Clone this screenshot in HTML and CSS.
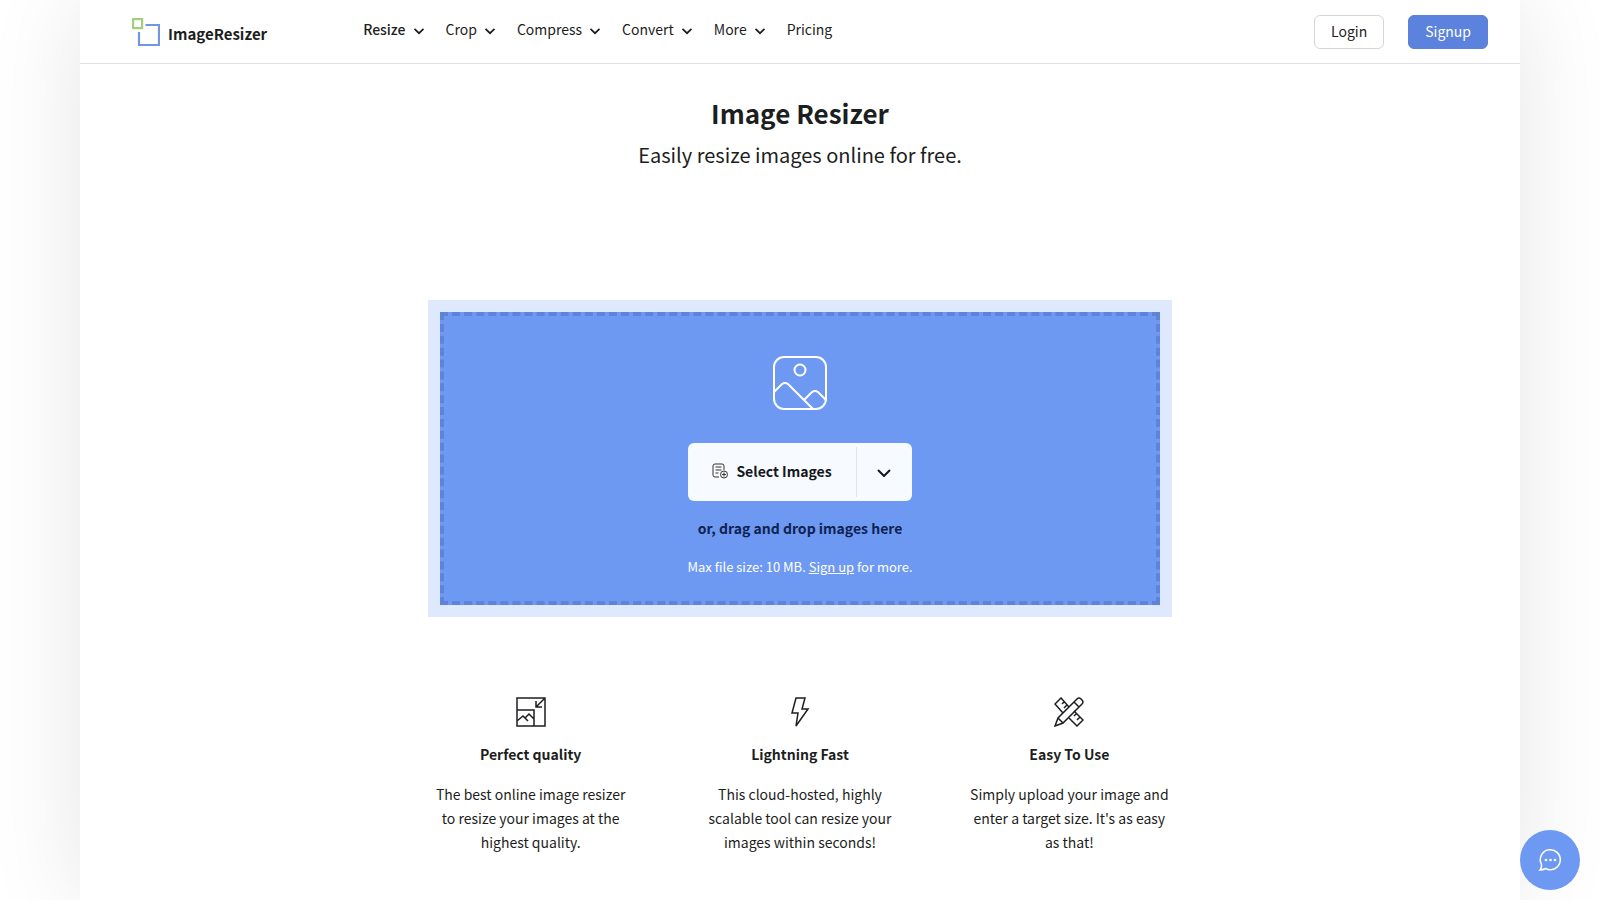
FILE: index.html
```html
<!DOCTYPE html>
<html lang="en">
<head>
  <meta charset="UTF-8">
  <meta name="viewport" content="width=device-width, initial-scale=1.0">
  <title>Image Resizer</title>
  <link rel="stylesheet" href="styles.css">
</head>
<body>
  <div class="page">
    <header class="navbar">
      <a class="logo" href="#">
        <svg width="28" height="28" viewBox="0 0 28 28" fill="none" stroke-width="2.200">
          <rect x="1.100" y="1.100" width="9" height="9" stroke="#a3cf7c"/>
          <path d="M13.500 7H27v20H7V14" stroke="#7296e4"/>
        </svg>
        <span>ImageResizer</span>
      </a>
      <nav class="menu">
        <a class="active" href="#">Resize <svg class="caret" viewBox="0 0 10 6"><path d="M.5 .8L5 5.200 9.500 .8"/></svg></a>
        <a href="#">Crop <svg class="caret" viewBox="0 0 10 6"><path d="M.5 .8L5 5.200 9.500 .8"/></svg></a>
        <a href="#">Compress <svg class="caret" viewBox="0 0 10 6"><path d="M.5 .8L5 5.200 9.500 .8"/></svg></a>
        <a href="#">Convert <svg class="caret" viewBox="0 0 10 6"><path d="M.5 .8L5 5.200 9.500 .8"/></svg></a>
        <a href="#">More <svg class="caret" viewBox="0 0 10 6"><path d="M.5 .8L5 5.200 9.500 .8"/></svg></a>
        <a href="#">Pricing</a>
      </nav>
      <div class="account">
        <a class="btn" href="#">Login</a>
        <a class="btn btn-primary" href="#">Signup</a>
      </div>
    </header>

    <main>
      <div class="hero">
        <h1>Image Resizer</h1>
        <p>Easily resize images online for free.</p>
      </div>

      <section class="uploader">
        <div class="dropzone">
          <svg class="picture" width="54" height="54" viewBox="0 0 54 54">
            <rect x="1" y="1" width="52" height="52" rx="10"/>
            <circle cx="27" cy="14" r="5.500"/>
            <path d="M1 36l8-8q3-2 6 0l25 25M31 44l8-8q3-2 6 0l8 8"/>
          </svg>
          <div class="select">
            <button class="select-main" type="button">
              <svg width="16" height="16" viewBox="0 0 16 16">
                <path d="M7 14H3a2 2 0 0 1-2-2V3a2 2 0 0 1 2-2h7a2 2 0 0 1 2 2v4M3.500 4h6M3.500 7h6M3.500 10h3"/>
                <circle cx="12" cy="11.500" r="3.500"/>
                <path d="M12 9.500v4M10 11.500h4"/>
              </svg>
              Select Images
            </button>
            <button class="select-more" type="button" aria-label="More sources">
              <svg width="14" height="8" viewBox="0 0 14 8"><path d="M1 1l6 6 6-6"/></svg>
            </button>
          </div>
          <p class="drag">or, drag and drop images here</p>
          <p class="limit">Max file size: 10 MB. <a href="#">Sign up</a> for more.</p>
        </div>
      </section>

      <section class="features">
        <div class="feature">
          <svg width="30" height="30" viewBox="0 0 30 30">
            <path d="M1 1h28v28H1zM1 13h17v16M28 2l-8 8M20 4v6h6M1 24l6-5 5 5M9 21l4-4 5 5"/>
          </svg>
          <h2>Perfect quality</h2>
          <p>The best online image resizer to resize your images at the highest quality.</p>
        </div>
        <div class="feature">
          <svg width="30" height="30" viewBox="0 0 30 30">
            <path d="M11 1h9l-3 11h6L11 29l2-13H7z"/>
          </svg>
          <h2>Lightning Fast</h2>
          <p>This cloud-hosted, highly scalable tool can resize your images within seconds!</p>
        </div>
        <div class="feature">
          <svg width="30" height="30" viewBox="0 0 30 30">
            <path d="M1 29l3-8L23 2q2-2 4 0l1 1q2 2 0 4L9 26zM4 21l5 5M20 5l5 5"/>
            <path d="M9 16L1 7l6-6 8 9M10 5L8 7M13 8l-3 3M20 14l9 9-6 6-8-8M22 17l-2 2M26 20l-3 3"/>
          </svg>
          <h2>Easy To Use</h2>
          <p>Simply upload your image and enter a target size. It's as easy as that!</p>
        </div>
      </section>
    </main>
  </div>

  <button class="chat" type="button" aria-label="Open chat">
    <svg width="22" height="22" viewBox="0 0 22 22">
      <path d="M1 21q2-2 1.500-5.500A10 10 0 1 1 6.500 19.500Q4 21 1 21z"/>
      <circle class="dot" cx="7" cy="11" r="1.300"/>
      <circle class="dot" cx="11.500" cy="11" r="1.300"/>
      <circle class="dot" cx="16" cy="11" r="1.300"/>
    </svg>
  </button>
</body>
</html>
```
FILE: styles.css
```css
* {
  box-sizing: border-box;
  margin: 0;
  padding: 0;
}

body {
  font-family: "Noto Sans CJK SC", "Noto Sans", sans-serif;
  font-size: 14px;
  line-height: 24px;
  color: #1c1e21;
  background: #fff;
}

a {
  color: inherit;
  text-decoration: none;
}

svg {
  fill: none;
  flex: none;
}

.page {
  width: 90%;
  min-height: 100vh;
  margin: 0 auto;
  background: #fff;
  box-shadow: 0 0 90px rgba(0, 0, 0, 0.1);
}

.navbar {
  display: flex;
  align-items: center;
  height: 64px;
  padding: 0 32px 0 52px;
  border-bottom: 1px solid #dfe1e5;
}

.logo {
  display: flex;
  align-items: center;
  gap: 8px;
  margin-right: 96px;
  font-size: 15px;
  font-weight: 700;
}

.logo span {
  padding-top: 4px;
}

.menu {
  display: flex;
  gap: 22px;
  padding-bottom: 6px;
}

.menu a {
  display: flex;
  align-items: center;
  gap: 8px;
}

.menu .active {
  font-weight: 500;
}

.caret {
  width: 10px;
  height: 6px;
  margin-top: 5px;
  overflow: visible;
  stroke: #1c1e21;
  stroke-width: 1.700;
}

.account {
  display: flex;
  gap: 24px;
  margin-left: auto;
}

.btn {
  padding: 3px 16px 5px;
  border: 1px solid #d3d6db;
  border-radius: 6px;
}

.btn-primary {
  color: #fff;
  background: #5b82dc;
  border-color: #5b82dc;
}

.hero {
  padding-top: 29px;
  text-align: center;
}

.hero h1 {
  font-size: 26px;
  font-weight: 700;
  line-height: 40px;
}

.hero p {
  margin-top: 4px;
  font-size: 20px;
  line-height: 36px;
}

.uploader {
  max-width: 744px;
  margin: 127px auto 0;
  padding: 12px;
  background: #dfe9fd;
}

.dropzone {
  display: flex;
  flex-direction: column;
  align-items: center;
  padding: 40px 16px 22px;
  background: #6e99f3;
  border: 4px dashed #5f83d6;
}

.picture {
  stroke: #fff;
  stroke-width: 2;
}

.select {
  display: flex;
  height: 58px;
  margin-top: 33px;
  background: #f7fafe;
  border-radius: 6px;
}

.select button {
  padding-bottom: 2px;
  color: #15181c;
  font: inherit;
  font-weight: 700;
  background: none;
  border: none;
  cursor: pointer;
}

.select .select-main {
  display: flex;
  align-items: center;
  gap: 8px;
  padding: 0 24px 2px;
  stroke: #333;
}

.select .select-more {
  width: 56px;
  margin: 4px 0;
  border-left: 1px solid #dfe5ee;
  stroke: #15181c;
  stroke-width: 2;
}

.drag {
  margin-top: 15px;
  color: #0e2350;
  font-weight: 700;
}

.limit {
  margin-top: 15px;
  color: #fff;
  font-size: 13px;
}

.limit a {
  text-decoration: underline;
}

.features {
  display: grid;
  grid-template-columns: repeat(3, 1fr);
  gap: 64px;
  max-width: 744px;
  margin: 80px auto 0;
  padding-bottom: 40px;
  text-align: center;
}

.feature svg {
  display: block;
  margin: 0 auto 15px;
  stroke: #1c1e21;
  stroke-width: 1.500;
}

.feature h2 {
  margin-bottom: 16px;
  font-size: 14px;
  font-weight: 700;
}

.chat {
  position: fixed;
  right: 20px;
  bottom: 10px;
  display: flex;
  align-items: center;
  justify-content: center;
  width: 60px;
  height: 60px;
  background: #6e99f3;
  border: none;
  border-radius: 50%;
  stroke: #fff;
  stroke-width: 1.500;
  cursor: pointer;
}

.chat svg {
  overflow: visible;
}

.dot {
  fill: #fff;
  stroke: none;
}
```
